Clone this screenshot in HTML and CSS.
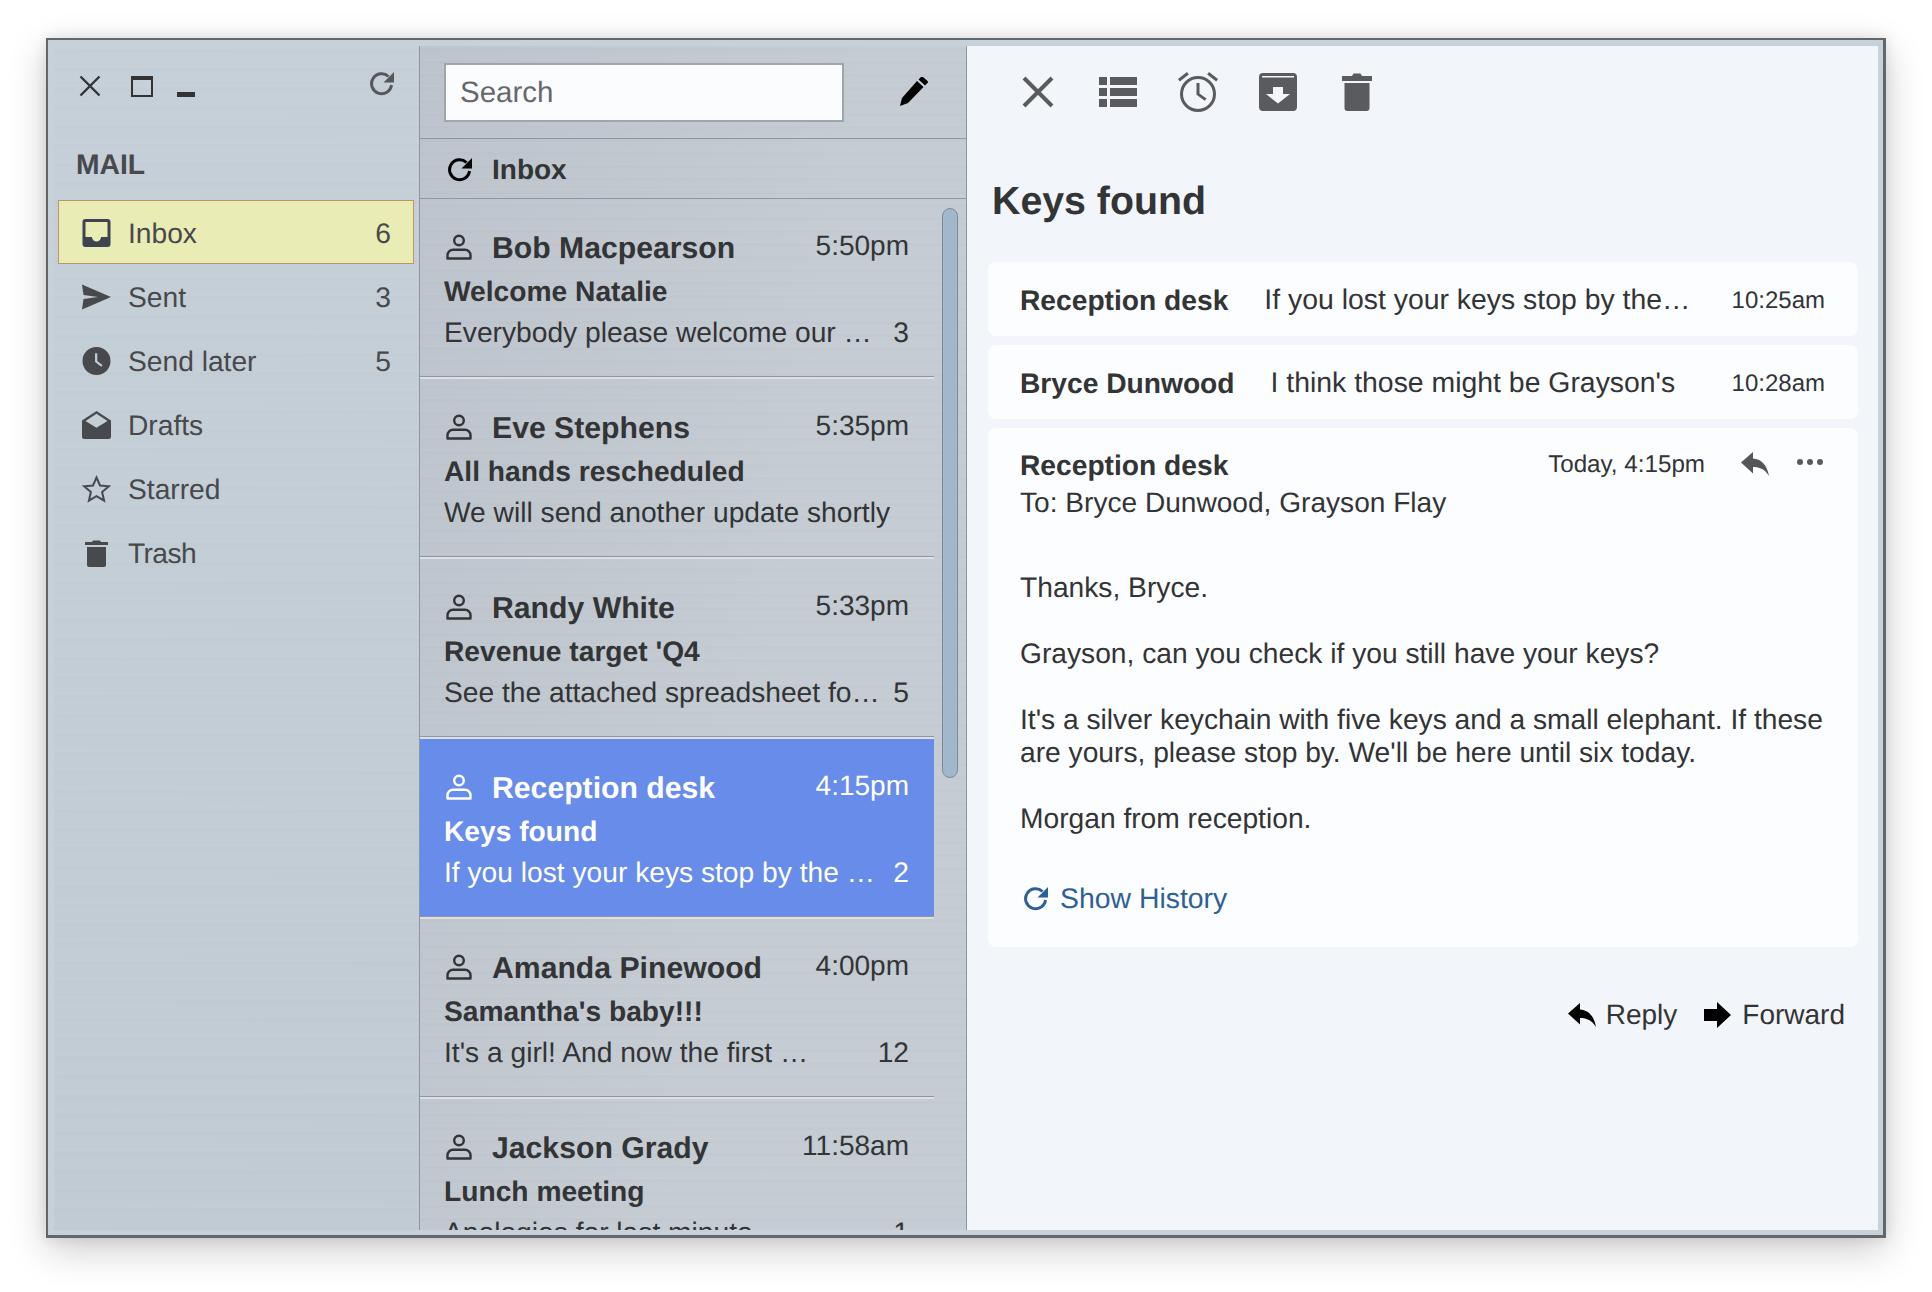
FILE: index.html
```html
<!DOCTYPE html>
<html>
<head>
	<meta charset="utf-8">
	<title>Mail</title>
	<link rel="stylesheet" href="styles.css">
</head>
<body>
	<svg class="defs" width="0" height="0">
		<symbol id="person" viewBox="0 0 26 26">
			<circle cx="13" cy="6.5" r="4.8" fill="none" stroke="currentColor" stroke-width="2.4"/>
			<path d="M1.5 24.5v-3.2a5.5 5.5 0 0 1 5.500-5.500h12a5.500 5.500 0 0 1 5.500 5.500v3.200z" fill="none" stroke="currentColor" stroke-width="2.400" stroke-linejoin="round"/>
		</symbol>
		<symbol id="reply" viewBox="0 0 28 24">
			<path d="M0 10.500 12 0v6.500c8 .5 14 6 16 17.500-4-6.500-9-9-16-9v6.500z" fill="currentColor"/>
		</symbol>
		<symbol id="reload" viewBox="0 0 26 26">
			<path d="M22.500 14a10 10 0 1 1-3-8.500" fill="none" stroke="currentColor" stroke-width="3"/>
			<path d="M25 1v10.500H14.500z" fill="currentColor"/>
		</symbol>
	</svg>

	<div class="window">
		<!-- sidebar -->
		<div class="sidebar">
			<div class="controls">
				<svg class="ctl-close" viewBox="0 0 22 22"><path d="M1.500 1.500l19 19M20.500 1.500l-19 19" stroke="#333" stroke-width="2.400" fill="none"/></svg>
				<svg class="ctl-max" viewBox="0 0 22 21"><path d="M0 0h22v21H0zM2 4v15h18V4z" fill="#333" fill-rule="evenodd"/></svg>
				<div class="ctl-min"></div>
				<svg class="ctl-reload"><use href="#reload"/></svg>
			</div>
			<div class="section-title">MAIL</div>
			<div class="nav">
				<div class="nav-item active">
					<svg class="nav-icon" viewBox="0 0 28 28"><path fill-rule="evenodd" d="M3 0h22a3 3 0 0 1 3 3v22a3 3 0 0 1-3 3H3a3 3 0 0 1-3-3V3a3 3 0 0 1 3-3zM3 3v15h6.500a4.500 4.500 0 0 0 9 0H25V3z"/></svg>
					<span class="nav-label">Inbox</span><span class="nav-count">6</span>
				</div>
				<div class="nav-item">
					<svg class="nav-icon" viewBox="0 0 29 25"><path d="M0 0l29 12.500L0 25l1.500-10.500L16 12.500 1.500 10.500z"/></svg>
					<span class="nav-label">Sent</span><span class="nav-count">3</span>
				</div>
				<div class="nav-item">
					<svg class="nav-icon" viewBox="0 0 29 29"><path fill-rule="evenodd" d="M14.500 0a14.500 14.500 0 1 1 0 29 14.500 14.500 0 0 1 0-29zM13 6.500v9l6.500 5 1.300-1.700-5.500-4.300V6.500z"/></svg>
					<span class="nav-label">Send later</span><span class="nav-count">5</span>
				</div>
				<div class="nav-item">
					<svg class="nav-icon" viewBox="0 0 29 28"><path d="M14.500 0L29 9.500v16a2.500 2.500 0 0 1-2.500 2.500h-24A2.500 2.500 0 0 1 0 25.500v-16zM14.500 2.800L3.500 10l11 6.800 11-6.800z" fill-rule="evenodd"/></svg>
					<span class="nav-label">Drafts</span><span class="nav-count"></span>
				</div>
				<div class="nav-item">
					<svg class="nav-icon" viewBox="0 0 29 28"><path d="M14.500 2.500l3.500 8 8.800.8-6.700 5.800 2 8.600-7.600-4.500-7.600 4.500 2-8.600-6.700-5.800 8.800-.8z" fill="none" stroke="#48494c" stroke-width="2"/></svg>
					<span class="nav-label">Starred</span><span class="nav-count"></span>
				</div>
				<div class="nav-item">
					<svg class="nav-icon" viewBox="0 0 29 28"><path d="M3 3h7l1-1.500h7l1 1.500h7v3H3zM5 8h19v18a2 2 0 0 1-2 2H7a2 2 0 0 1-2-2z"/></svg>
					<span class="nav-label label-tight">Trash</span><span class="nav-count"></span>
				</div>
			</div>
		</div>

		<!-- message list -->
		<div class="list-pane">
			<div class="search-bar">
				<div class="search">Search</div>
				<svg class="compose" viewBox="0 0 28 30"><path d="M0 29l2-8L17 4l6.500 6L8 26zM18.500 2.500L21 0q1-.8 2 0l4.500 4q1 1 0 2L25 8.500z"/></svg>
			</div>
			<div class="list-head">
				<svg class="head-reload"><use href="#reload"/></svg>
				<span>Inbox</span>
			</div>
			<div class="scroll-area">
				<div class="scrollbar"></div>
				<div class="item">
					<div class="item-top"><svg class="person"><use href="#person"/></svg><span class="from">Bob Macpearson</span><span class="when">5:50pm</span></div>
					<div class="subject">Welcome Natalie</div>
					<div class="item-bottom"><span class="preview">Everybody please welcome our …</span><span class="num">3</span></div>
				</div>
				<div class="item">
					<div class="item-top"><svg class="person"><use href="#person"/></svg><span class="from">Eve Stephens</span><span class="when">5:35pm</span></div>
					<div class="subject">All hands rescheduled</div>
					<div class="item-bottom"><span class="preview">We will send another update shortly</span></div>
				</div>
				<div class="item">
					<div class="item-top"><svg class="person"><use href="#person"/></svg><span class="from">Randy White</span><span class="when">5:33pm</span></div>
					<div class="subject">Revenue target 'Q4</div>
					<div class="item-bottom"><span class="preview">See the attached spreadsheet fo…</span><span class="num">5</span></div>
				</div>
				<div class="item selected">
					<div class="item-top"><svg class="person"><use href="#person"/></svg><span class="from">Reception desk</span><span class="when">4:15pm</span></div>
					<div class="subject">Keys found</div>
					<div class="item-bottom"><span class="preview">If you lost your keys stop by the …</span><span class="num">2</span></div>
				</div>
				<div class="item">
					<div class="item-top"><svg class="person"><use href="#person"/></svg><span class="from">Amanda Pinewood</span><span class="when">4:00pm</span></div>
					<div class="subject">Samantha's baby!!!</div>
					<div class="item-bottom"><span class="preview">It's a girl! And now the first …</span><span class="num">12</span></div>
				</div>
				<div class="item">
					<div class="item-top"><svg class="person"><use href="#person"/></svg><span class="from">Jackson Grady</span><span class="when">11:58am</span></div>
					<div class="subject">Lunch meeting</div>
					<div class="item-bottom"><span class="preview">Apologies for last minute</span><span class="num">1</span></div>
				</div>
			</div>
		</div>

		<!-- reading pane -->
		<div class="reader">
			<div class="toolbar">
				<svg class="tb-close" viewBox="0 0 36 32"><path d="M2 2l28 28M30 2L2 30" stroke="#5a5b5f" stroke-width="4" fill="none"/></svg>
				<svg class="tb-list" viewBox="0 0 38 30"><path d="M0 0h8v8H0zM11 0h27v8H11zM0 11h8v8H0zM11 11h27v8H11zM0 22h8v8H0zM11 22h27v8H11z"/></svg>
				<svg class="tb-alarm" viewBox="0 0 40 40"><circle cx="20" cy="22" r="16.500" fill="none" stroke="#5a5b5f" stroke-width="3"/><path d="M18.500 11h3v10.500l7 5-1.700 2.300-8.300-6z"/><path d="M0 7L9 0l1.800 2.400-9 7zM40 7l-9-7-1.800 2.400 9 7z"/></svg>
				<svg class="tb-archive" viewBox="0 0 38 38"><path fill-rule="evenodd" d="M4 0h30a4 4 0 0 1 4 4v30a4 4 0 0 1-4 4H4a4 4 0 0 1-4-4V4a4 4 0 0 1 4-4zM3 3v1.500h32V3zM14 14v7H7l12 9.500L31 21h-7v-7z"/></svg>
				<svg class="tb-trash" viewBox="0 0 34 38"><path d="M4 3h10l1.500-2.500h7L24 3h10v5H4zM6.500 10h25v25a3 3 0 0 1-3 3h-19a3 3 0 0 1-3-3z"/></svg>
			</div>
			<h1 class="title">Keys found</h1>

			<div class="card row">
				<span class="sender">Reception desk</span>
				<span class="snippet">If you lost your keys stop by the…</span>
				<span class="stamp">10:25am</span>
			</div>
			<div class="card row">
				<span class="sender">Bryce Dunwood</span>
				<span class="snippet">I think those might be Grayson's</span>
				<span class="stamp">10:28am</span>
			</div>
			<div class="card message">
				<div class="msg-head">
					<span class="sender">Reception desk</span>
					<span class="stamp msg-stamp">Today, 4:15pm</span>
					<svg class="msg-reply"><use href="#reply"/></svg>
					<svg class="msg-more" viewBox="0 0 26 6"><circle cx="3" cy="3" r="3"/><circle cx="13" cy="3" r="3"/><circle cx="23" cy="3" r="3"/></svg>
				</div>
				<div class="recipients">To: Bryce Dunwood, Grayson Flay</div>
				<div class="body-text">
					<p>Thanks, Bryce.</p>
					<p>Grayson, can you check if you still have your keys?</p>
					<p>It's a silver keychain with five keys and a small elephant. If these are yours, please stop by. We'll be here until six today.</p>
					<p>Morgan from reception.</p>
				</div>
				<div class="history">
					<svg class="history-icon"><use href="#reload"/></svg>
					<span>Show History</span>
				</div>
			</div>
			<div class="actions">
				<svg class="act-reply"><use href="#reply"/></svg>
				<span class="act-label">Reply</span>
				<svg class="act-forward" viewBox="0 0 27 26"><path d="M0 7h13V0l14 13-14 13v-7H0z"/></svg>
				<span class="act-label">Forward</span>
			</div>
		</div>
	</div>
</body>
</html>
```

FILE: styles.css
```css
/* CSS Styling */
body {
	margin: 0;
	padding: 38px 0 0 46px;
	height: 1292px;
	box-sizing: border-box;
	overflow: hidden;
	background-color: #fff;
	font-family: "Liberation Sans", Arial, sans-serif;
	text-rendering: geometricPrecision;
	color: #333436;
}

.defs {
	display: block;
	height: 0;
}

.window {
	display: flex;
	box-sizing: border-box;
	width: 1840px;
	height: 1200px;
	border: 2px solid #63676b;
	border-bottom-width: 3px;
	border-right-width: 3px;
	padding: 6px 5px 5px 6px;
	background-color: #c6d1da;
	box-shadow: 0 12px 36px rgba(0, 0, 0, 0.2), 0 0 12px rgba(0, 0, 0, 0.1);
}

/* sidebar */
.sidebar {
	width: 366px;
	flex-shrink: 0;
	box-sizing: border-box;
	border-right: 1px solid #8f969d;
	background-color: #c4ced7;
	background-image:
		repeating-linear-gradient(180deg, rgba(255, 255, 255, 0.02) 0 3px, rgba(120, 130, 140, 0.02) 3px 7px, rgba(255, 255, 255, 0) 7px 19px),
		linear-gradient(170deg, rgba(255, 255, 255, 0.04), rgba(100, 110, 120, 0.03));
}

.controls {
	display: flex;
	align-items: flex-end;
	height: 51px;
	padding-left: 25px;
}

.ctl-close {
	width: 22px;
	height: 22px;
}

.ctl-max {
	width: 22px;
	height: 21px;
	margin-left: 30px;
}

.ctl-min {
	width: 18px;
	height: 5px;
	margin-left: 24px;
	background-color: #333;
}

.ctl-reload {
	width: 26px;
	height: 26px;
	margin-left: 174px;
	color: #55575a;
}

.section-title {
	margin: 50px 0 0 22px;
	font-size: 28.3px;
	line-height: 34px;
	font-weight: bold;
	color: #48494c;
}

.nav {
	margin-top: 19px;
	padding: 0 5px 0 4px;
}

.nav-item {
	display: flex;
	align-items: center;
	box-sizing: border-box;
	height: 64px;
	padding: 2px 22px 0 23px;
	border: 1px solid transparent;
	font-size: 28.2px;
	color: #48494c;
}

.nav-item.active {
	background-color: #e9edb5;
	border-color: #c4935f;
}

.nav-icon {
	width: 29px;
	height: 28px;
	margin-right: 17px;
	fill: #48494c;
}

.active .nav-icon {
	fill: #3d4450;
}

.nav-label {
	flex: 1;
}

.label-tight {
	letter-spacing: -0.6px;
}

/* list */
.list-pane {
	display: flex;
	flex-direction: column;
	width: 547px;
	flex-shrink: 0;
	box-sizing: border-box;
	border-right: 1px solid #8f969d;
	background-color: #c2c9d1;
	background-image:
		repeating-linear-gradient(180deg, rgba(255, 255, 255, 0.025) 0 2px, rgba(110, 115, 125, 0.025) 2px 5px, rgba(255, 255, 255, 0) 5px 13px),
		linear-gradient(100deg, rgba(150, 150, 165, 0.1), rgba(255, 255, 255, 0.05) 60%);
}

.search-bar {
	display: flex;
	align-items: center;
	box-sizing: border-box;
	height: 93px;
	padding-left: 24px;
	border-bottom: 1px solid #8f969d;
}

.search {
	box-sizing: border-box;
	width: 400px;
	height: 59px;
	padding-left: 14px;
	border: 2px solid #a0a5ab;
	background-color: #fbfcfe;
	font-size: 29.5px;
	line-height: 55px;
	color: #66686c;
}

.compose {
	width: 28px;
	height: 30px;
	margin-left: 56px;
	fill: #000;
}

.list-head {
	display: flex;
	align-items: center;
	box-sizing: border-box;
	height: 60px;
	padding: 3px 0 0 27px;
	border-bottom: 1px solid #8f969d;
	font-size: 28px;
	font-weight: bold;
}

.head-reload {
	width: 26px;
	height: 26px;
	margin-right: 19px;
	color: #000;
}

.scroll-area {
	position: relative;
	flex: 1;
	overflow: hidden;
}

.scrollbar {
	position: absolute;
	top: 9px;
	left: 522px;
	box-sizing: border-box;
	width: 16px;
	height: 570px;
	border: 1px solid #808a95;
	border-radius: 8px;
	background-color: #a0b7cc;
}

.item {
	box-sizing: border-box;
	width: 514px;
	height: 180px;
	padding: 32px 25px 0 24px;
	border-top: 2px solid #dde1e6;
	border-bottom: 1px solid #8f969d;
}

.scrollbar + .item {
	margin-top: -2px;
	border-top-color: transparent;
}

.item-top {
	display: flex;
	align-items: center;
	height: 36px;
}

.person {
	width: 26px;
	height: 26px;
	margin: -5px 20px 0 2px;
	color: #333436;
}

.from {
	flex: 1;
	font-size: 30.2px;
	font-weight: bold;
}

.when {
	position: relative;
	top: -3px;
	font-size: 28px;
}

.subject {
	margin-top: 6px;
	font-size: 28.2px;
	line-height: 36px;
	font-weight: bold;
}

.item-bottom {
	display: flex;
	justify-content: space-between;
	margin-top: 5px;
	font-size: 28.2px;
	line-height: 36px;
	white-space: nowrap;
}

.selected {
	background-color: #678cea;
	background-clip: padding-box;
	color: #fff;
}

.selected .person {
	color: #fff;
}

/* reader */
.reader {
	flex: 1;
	box-sizing: border-box;
	padding: 26px 20px 0 21px;
	background-color: #f2f5fa;
}

.toolbar {
	display: flex;
	align-items: center;
	gap: 41px;
	height: 40px;
	padding-left: 34px;
}

.toolbar svg {
	fill: #5a5b5f;
}

.tb-close {
	width: 36px;
	height: 32px;
}

.tb-list {
	width: 38px;
	height: 30px;
}

.tb-alarm {
	width: 40px;
	height: 40px;
}

.tb-archive {
	width: 38px;
	height: 38px;
}

.tb-trash {
	width: 34px;
	height: 38px;
}

.title {
	margin: 66px 0 38px 4px;
	font-size: 39.3px;
	line-height: 46px;
	font-weight: bold;
}

.card {
	border-radius: 8px;
	background-color: #fcfdff;
}

.row {
	display: flex;
	align-items: center;
	box-sizing: border-box;
	height: 74px;
	margin-bottom: 9px;
	padding: 2px 33px 0 32px;
}

.sender {
	font-size: 28.2px;
	font-weight: bold;
}

.snippet {
	margin-left: 36px;
	font-size: 28.4px;
}

.stamp {
	margin-left: auto;
	padding-top: 2px;
	font-size: 24px;
}

.message {
	padding: 19px 33px 30px 32px;
}

.msg-head {
	display: flex;
	align-items: center;
	height: 36px;
}

.msg-stamp {
	padding-top: 0;
	font-size: 24.2px;
}

.msg-reply {
	width: 28px;
	height: 24px;
	margin: -3px 0 0 36px;
	color: #55565a;
}

.msg-more {
	width: 26px;
	height: 6px;
	margin: -7px 2px 0 28px;
	fill: #5a5b5f;
}

.recipients {
	margin-top: 2px;
	font-size: 28.1px;
	line-height: 36px;
}

.body-text {
	margin-top: 50px;
	font-size: 28.2px;
	line-height: 33px;
}

.body-text p {
	margin: 0 0 33px 0;
}

.history {
	display: flex;
	align-items: center;
	height: 36px;
	margin-top: 46px;
	font-size: 28.4px;
	color: #2f5f97;
}

.history-icon {
	width: 26px;
	height: 26px;
	margin: 0 11px 0 3px;
}

.actions {
	display: flex;
	align-items: center;
	justify-content: flex-end;
	height: 36px;
	margin-top: 50px;
	padding-right: 13px;
	font-size: 28px;
}

.act-reply {
	width: 28px;
	height: 24px;
	margin-right: 10px;
	color: #000;
}

.act-forward {
	width: 27px;
	height: 26px;
	margin: 0 11px 0 27px;
	fill: #000;
}
```
